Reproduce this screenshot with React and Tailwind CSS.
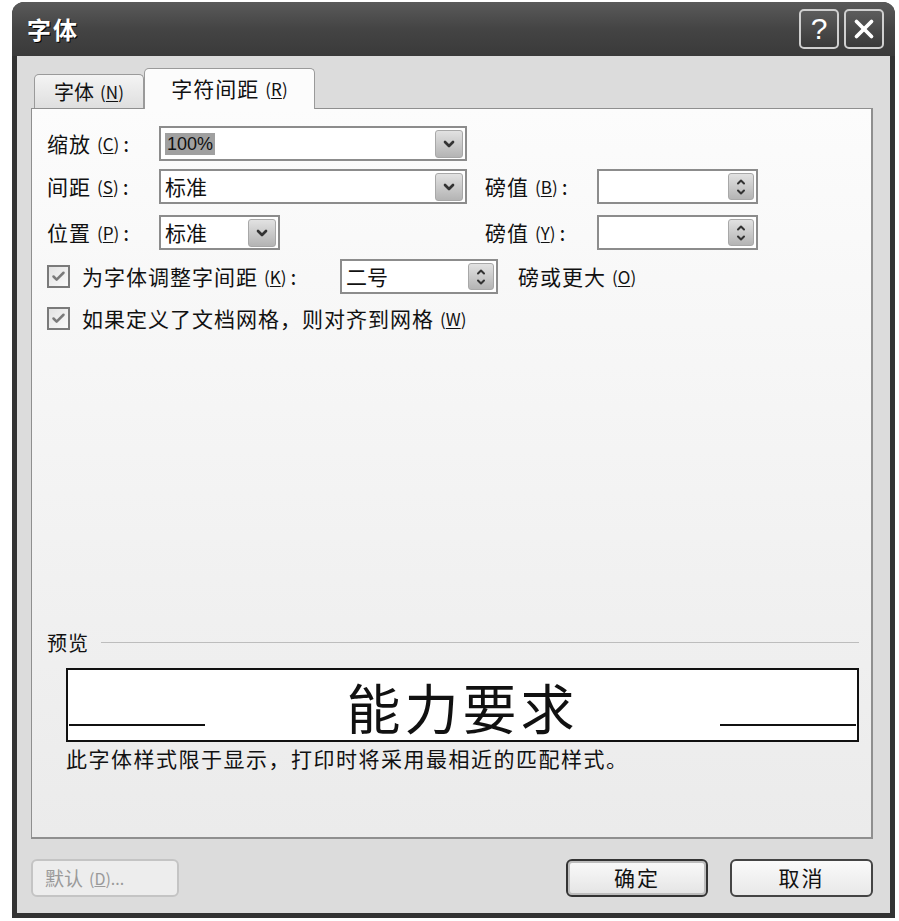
import { ChevronDown, ChevronUp, Check, X } from "lucide-react"

const cjk = { fontFamily: '"Noto Sans CJK SC", "Noto Sans", sans-serif' }

const Key = ({ k }) => (
    <span className="text-[17px] ml-[6px] tracking-normal">
        (<span className="underline underline-offset-2">{k}</span>)
    </span>
)

const DropBtn = () => (
    <div className="w-[28px] h-[28px] rounded-[3px] bg-gradient-to-b from-[#e2e2e2] to-[#b4b4b4] border border-[#a8a8a8] flex items-center justify-center">
        <ChevronDown size={16} strokeWidth={4} className="text-[#333]" />
    </div>
)

const SpinBtn = () => (
    <div className="w-[26px] h-[27px] rounded-[3px] bg-gradient-to-b from-[#e2e2e2] to-[#b4b4b4] border border-[#a8a8a8] flex flex-col items-center justify-center">
        <ChevronUp size={12} strokeWidth={4} className="text-[#333] -mb-[1px]" />
        <ChevronDown size={12} strokeWidth={4} className="text-[#333] -mt-[1px]" />
    </div>
)

const Combo = ({ w, value, highlight }) => (
    <div className={`${w} h-[35px] border-2 border-[#8c8c8c] bg-white flex items-center justify-between pl-[4px] pr-[2px]`}>
        {highlight
            ? <span className="bg-[#a0a0a0] px-[2px] text-[18px] leading-[22px] text-[#111]" style={{ fontFamily: '"Liberation Sans", sans-serif' }}>{value}</span>
            : <span className="text-[21px]">{value}</span>}
        <DropBtn />
    </div>
)

const SpinBox = ({ w, value }) => (
    <div className={`${w} h-[35px] border-2 border-[#8c8c8c] bg-white flex items-center justify-between pl-[4px] pr-[2px]`}>
        <span className="text-[21px]">{value}</span>
        <SpinBtn />
    </div>
)

const CheckBox = () => (
    <div className="w-[23px] h-[23px] border-2 border-[#7a7a7a] bg-gradient-to-br from-[#e2e2e2] to-[#fafafa] flex items-center justify-center">
        <Check size={15} strokeWidth={4} className="text-[#7a7a7a]" />
    </div>
)

const Label = ({ text, k, w }) => (
    <div className={`${w} text-[21px] tracking-[1px] flex items-center`}>
        {text}<Key k={k} /><span className="ml-[4px]">:</span>
    </div>
)

export default function App() {
    return (
        <div className="w-[899px] h-[921px] bg-white pt-[2px] pl-[12px] text-[#111]" style={cjk}>
            <div className="w-[883px] h-[916px] rounded-t-[12px] bg-[#333] flex flex-col">
                {/* Title bar */}
                <div className="h-[54px] rounded-t-[12px] bg-gradient-to-b from-[#5a5a5a] via-[#444] to-[#3a3a3a] flex items-center justify-between pl-[15px] pr-[11px]">
                    <span className="text-white text-[24px] font-bold tracking-[2px] [text-shadow:1px_1px_0_#000]">字体</span>
                    <div className="flex gap-[5px]">
                        <div className="w-[40px] h-[40px] rounded-[5px] border-2 border-[#cfcfcf] bg-gradient-to-b from-[#5c5c5c] to-[#3a3a3a] flex items-center justify-center text-white text-[30px] leading-none" style={{ fontFamily: '"Liberation Sans", sans-serif' }}>?</div>
                        <div className="w-[40px] h-[40px] rounded-[5px] border-2 border-[#cfcfcf] bg-gradient-to-b from-[#5c5c5c] to-[#3a3a3a] flex items-center justify-center">
                            <X size={30} strokeWidth={3} className="text-white" />
                        </div>
                    </div>
                </div>

                {/* Client */}
                <div className="flex-1 mx-[5px] mb-[5px] bg-[#dcdcdc] flex flex-col pl-[14px] pr-[17px]">
                    {/* Tabs */}
                    <div className="flex items-end h-[52px] pt-[12px]">
                        <div className="w-[110px] h-[35px] mb-[-1px] border border-b-0 border-[#9a9a9a] rounded-t-[5px] bg-gradient-to-b from-[#f4f4f4] to-[#dedede] flex items-center justify-center text-[20px] ml-[3px]">
                            字体<Key k="N" />
                        </div>
                        <div className="w-[171px] h-[41px] mb-[-1px] border border-b-0 border-[#9a9a9a] rounded-t-[5px] bg-[#fcfcfc] flex items-center justify-center text-[21px] tracking-[1px] relative z-10">
                            字符间距<Key k="R" />
                        </div>
                    </div>

                    {/* Panel */}
                    <div className="h-[731px] border border-[#8f8f8f] border-r-2 border-b-2 bg-gradient-to-b from-[#fcfcfc] to-[#ebebeb] flex flex-col pl-[15px] pr-[12px]">
                        <div className="flex items-center mt-[17px]">
                            <Label text="缩放" k="C" w="w-[112px]" />
                            <Combo w="w-[308px]" value="100%" highlight />
                        </div>
                        <div className="flex items-center mt-[8px]">
                            <Label text="间距" k="S" w="w-[112px]" />
                            <Combo w="w-[308px]" value="标准" />
                            <div className="w-[18px]" />
                            <Label text="磅值" k="B" w="w-[112px]" />
                            <SpinBox w="w-[161px]" value="" />
                        </div>
                        <div className="flex items-center mt-[11px]">
                            <Label text="位置" k="P" w="w-[112px]" />
                            <Combo w="w-[121px]" value="标准" />
                            <div className="w-[205px]" />
                            <Label text="磅值" k="Y" w="w-[112px]" />
                            <SpinBox w="w-[161px]" value="" />
                        </div>
                        <div className="flex items-center mt-[9px]">
                            <CheckBox />
                            <div className="ml-[12px] w-[258px] text-[21px] tracking-[1px] flex items-center">
                                为字体调整字间距<Key k="K" /><span className="ml-[4px]">:</span>
                            </div>
                            <SpinBox w="w-[158px]" value="二号" />
                            <div className="ml-[20px] text-[21px] tracking-[1px] flex items-center">
                                磅或更大<Key k="O" />
                            </div>
                        </div>
                        <div className="flex items-center mt-[9px]">
                            <CheckBox />
                            <div className="ml-[12px] text-[21px] tracking-[1px] flex items-center">
                                如果定义了文档网格，则对齐到网格<Key k="W" />
                            </div>
                        </div>

                        {/* Preview */}
                        <div className="mt-auto mb-[63px]">
                            <div className="flex items-center">
                                <span className="text-[20px] tracking-[1px]">预览</span>
                                <div className="flex-1 h-px bg-[#bdbdbd] ml-[12px]" />
                            </div>
                            <div className="ml-[19px] mt-[10px] h-[74px] border-2 border-[#111] bg-white flex items-end justify-between px-[1px] pb-[14px] relative">
                                <div className="w-[136px] h-[2px] bg-[#111]" />
                                <div className="w-[136px] h-[2px] bg-[#111]" />
                                <div className="absolute inset-0 flex items-center justify-center text-[54px] tracking-[4px] leading-none pt-[4px]">能力要求</div>
                            </div>
                            <div className="ml-[19px] mt-[1px] text-[21px] tracking-[1.5px]">此字体样式限于显示，打印时将采用最相近的匹配样式。</div>
                        </div>
                    </div>

                    {/* Buttons */}
                    <div className="flex items-center mt-[20px]">
                        <div className="w-[148px] h-[38px] rounded-[6px] border-2 border-[#c4c4c4] bg-[#ededed] flex items-center pl-[12px] text-[19px] text-[#9a9a9a]">
                            默认<span className="ml-[6px] text-[16px]">(<span className="underline">D</span>)...</span>
                        </div>
                        <div className="flex-1" />
                        <div className="w-[142px] h-[38px] rounded-[6px] border-2 border-[#333] bg-gradient-to-b from-[#fafafa] to-[#e4e4e4] shadow-[inset_0_0_0_2px_#bdbdbd] flex items-center justify-center text-[21px] tracking-[2px]">
                            确定
                        </div>
                        <div className="w-[143px] h-[38px] ml-[22px] rounded-[6px] border-2 border-[#444] bg-gradient-to-b from-[#fafafa] to-[#e8e8e8] flex items-center justify-center text-[21px] tracking-[2px]">
                            取消
                        </div>
                    </div>
                </div>
            </div>
        </div>
    )
}
